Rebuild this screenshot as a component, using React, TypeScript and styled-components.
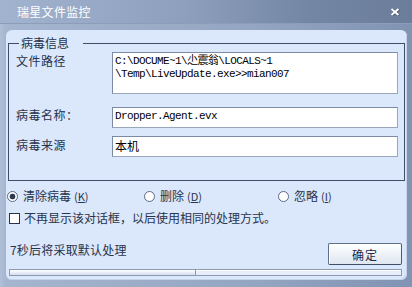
import styled, { createGlobalStyle } from 'styled-components';

const GlobalStyle = createGlobalStyle`
  html, body {
    margin: 0;
    padding: 0;
    background: #ffffff;
  }
  body {
    font-family: "Noto Sans CJK SC", "Noto Sans", sans-serif;
  }
`;

const Window = styled.div`
  width: 412px;
  height: 287px;
  display: flex;
  flex-direction: column;
  background: linear-gradient(to right, #b0bfd7 0px, #a5b5cf 6px, #95a6c2 60%, #8093b2 100%);
  overflow: hidden;
`;

const TitleBar = styled.div`
  height: 24px;
  flex: none;
  display: flex;
  align-items: center;
  justify-content: space-between;
  padding: 0 12px 0 17px;
  background: linear-gradient(to right, #a2b3cf 0%, #8d9fbd 45%, #7386a4 75%, #6b7d9b 100%);
  border-bottom: 1px solid #8c9dba;
  box-sizing: border-box;
`;

const Title = styled.span`
  color: #ffffff;
  font-size: 12px;
  line-height: 14px;
  letter-spacing: 0.3px;
`;

const Frame = styled.div`
  flex: 1;
  min-height: 0;
  display: flex;
  padding: 6px 5px 7px 6px;
`;

const Panel = styled.div`
  flex: 1;
  display: flex;
  flex-direction: column;
  background: #dbe7fa;
  border-radius: 6px;
  padding: 4px 0 3px 0;
  box-shadow: inset -1px -1px 0 #c5d3ea;
`;

const Group = styled.fieldset`
  margin: 0 2px 0 2px;
  padding: 0 6px 23px 7px;
  border: 1px solid #3e4e68;
  border-radius: 0;
  min-width: 0;
`;

const Legend = styled.legend`
  margin-left: 3px;
  padding: 0 14px 0 2px;
  font-size: 12px;
  line-height: 18px;
  height: 18px;
  color: #253249;
`;

const FieldGrid = styled.div`
  display: grid;
  grid-template-columns: 96px 286px;
  grid-template-rows: 42px auto auto;
`;

const Label = styled.div<{ $gap?: number; $top: number }>`
  font-size: 12px;
  line-height: 14px;
  color: #27344c;
  margin-top: ${(p) => p.$gap ?? 0}px;
  padding-top: ${(p) => p.$top}px;
  letter-spacing: 0.5px;
`;

const Field = styled.div<{ $gap?: number; $tall?: boolean; $cjk?: boolean }>`
  box-sizing: border-box;
  height: ${(p) => (p.$tall ? 42 : 21)}px;
  margin-top: ${(p) => p.$gap ?? 0}px;
  background: #ffffff;
  border: 1px solid #7c8ba3;
  border-right-color: #9aa7bb;
  border-bottom-color: #9aa7bb;
  padding: ${(p) => (p.$cjk ? '1px 2px 0 2px' : '2px 2px 0 2px')};
  font-family: ${(p) =>
    p.$cjk ? '"Noto Sans CJK SC", sans-serif' : '"Liberation Mono", "Noto Sans CJK SC", monospace'};
  font-size: ${(p) => (p.$cjk ? 12 : 11)}px;
  letter-spacing: ${(p) => (p.$cjk ? 0 : -0.6)}px;
  line-height: ${(p) => (p.$cjk ? 16 : 13)}px;
  color: #000000;
  white-space: pre;
  overflow: hidden;
`;

const RadioRow = styled.div`
  display: grid;
  grid-template-columns: 137px 134px 1fr;
  margin: 7px 0 0 1px;
  height: 16px;
  align-items: center;
`;

const Option = styled.label`
  display: flex;
  align-items: center;
  gap: 5px;
  font-size: 12px;
  line-height: 14px;
  color: #27344c;
`;

const RadioDot = styled.span<{ $checked?: boolean }>`
  width: 11px;
  height: 11px;
  box-sizing: border-box;
  border-radius: 50%;
  border: 1px solid #5c6a82;
  background: ${(p) =>
    p.$checked ? 'radial-gradient(circle, #2e3950 0 2.6px, #ffffff 3.2px)' : '#ffffff'};
  flex: none;
`;

const Key = styled.span`
  font-size: 11px;
  margin-left: 3px;
  letter-spacing: 0;
  u {
    text-underline-offset: 1px;
  }
`;

const CheckRow = styled.label`
  display: flex;
  align-items: center;
  gap: 4px;
  margin: 6px 0 0 3px;
  height: 16px;
  font-size: 12px;
  line-height: 14px;
  color: #27344c;
`;

const CheckBox = styled.span`
  width: 11px;
  height: 11px;
  box-sizing: border-box;
  border: 1px solid #27344c;
  background: #ffffff;
  flex: none;
`;

const Footer = styled.div`
  display: flex;
  justify-content: space-between;
  align-items: flex-start;
  margin: 17px 5px 0 4px;
  height: 22px;
`;

const Countdown = styled.span`
  font-size: 12px;
  line-height: 14px;
  color: #27344c;
  letter-spacing: 0.2px;
`;

const OkButton = styled.button`
  width: 74px;
  height: 22px;
  padding: 0;
  font-family: "Noto Sans CJK SC", sans-serif;
  font-size: 12px;
  color: #1f2a3e;
  background: linear-gradient(to bottom, #ffffff 0%, #f1f4f9 40%, #dfe6f0 100%);
  border: 1px solid #5f6f8c;
  border-right-color: #4a5a76;
  border-bottom-color: #3e4d68;
  border-radius: 2px;
  box-shadow: inset 1px 1px 0 #ffffff;
  letter-spacing: 1px;
`;

const Progress = styled.div`
  margin: 4px 5px 0 3px;
  height: 7px;
  flex: none;
  box-sizing: border-box;
  border: 1px solid #8c9ab2;
  background: #e8eef9;
  box-shadow: inset 0 1px 0 #ffffff;
  display: flex;
`;

const ProgressFill = styled.div`
  height: 100%;
  background: linear-gradient(to bottom, #ffffff, #d3ddf0);
  border-right: 1px solid #8c9ab2;
`;

function CloseIcon() {
  return (
    <svg width="10" height="8" viewBox="0 0 10 8">
      <path d="M1.5 1 L8.5 7 M8.5 1 L1.5 7" stroke="#3c4a63" strokeWidth="2.4" transform="translate(0.5 0.5)" />
      <path d="M1.5 1 L8.5 7 M8.5 1 L1.5 7" stroke="#ffffff" strokeWidth="2" />
    </svg>
  );
}

export default function App() {
  const elapsed = 0.473;
  const filePath = 'C:\\DOCUME~1\\尐震翁\\LOCALS~1\n\\Temp\\LiveUpdate.exe>>mian007';
  return (
    <>
      <GlobalStyle />
      <Window>
        <TitleBar>
          <Title>瑞星文件监控</Title>
          <CloseIcon />
        </TitleBar>
        <Frame>
          <Panel>
            <Group>
              <Legend>病毒信息</Legend>
              <FieldGrid>
                <Label $top={2}>文件路径</Label>
                <Field $tall>{filePath}</Field>
                <Label $gap={13} $top={1}>病毒名称：</Label>
                <Field $gap={13}>Dropper.Agent.evx</Field>
                <Label $gap={8} $top={2}>病毒来源</Label>
                <Field $gap={8} $cjk>本机</Field>
              </FieldGrid>
            </Group>
            <RadioRow>
              <Option>
                <RadioDot $checked />
                <span>
                  清除病毒
                  <Key>
                    (<u>K</u>)
                  </Key>
                </span>
              </Option>
              <Option>
                <RadioDot />
                <span>
                  删除
                  <Key>
                    (<u>D</u>)
                  </Key>
                </span>
              </Option>
              <Option>
                <RadioDot />
                <span>
                  忽略
                  <Key>
                    (<u>I</u>)
                  </Key>
                </span>
              </Option>
            </RadioRow>
            <CheckRow>
              <CheckBox />
              <span>不再显示该对话框，以后使用相同的处理方式。</span>
            </CheckRow>
            <Footer>
              <Countdown>7秒后将采取默认处理</Countdown>
              <OkButton>确定</OkButton>
            </Footer>
            <Progress>
              <ProgressFill style={{ width: `${elapsed * 100}%` }} />
            </Progress>
          </Panel>
        </Frame>
      </Window>
    </>
  );
}
